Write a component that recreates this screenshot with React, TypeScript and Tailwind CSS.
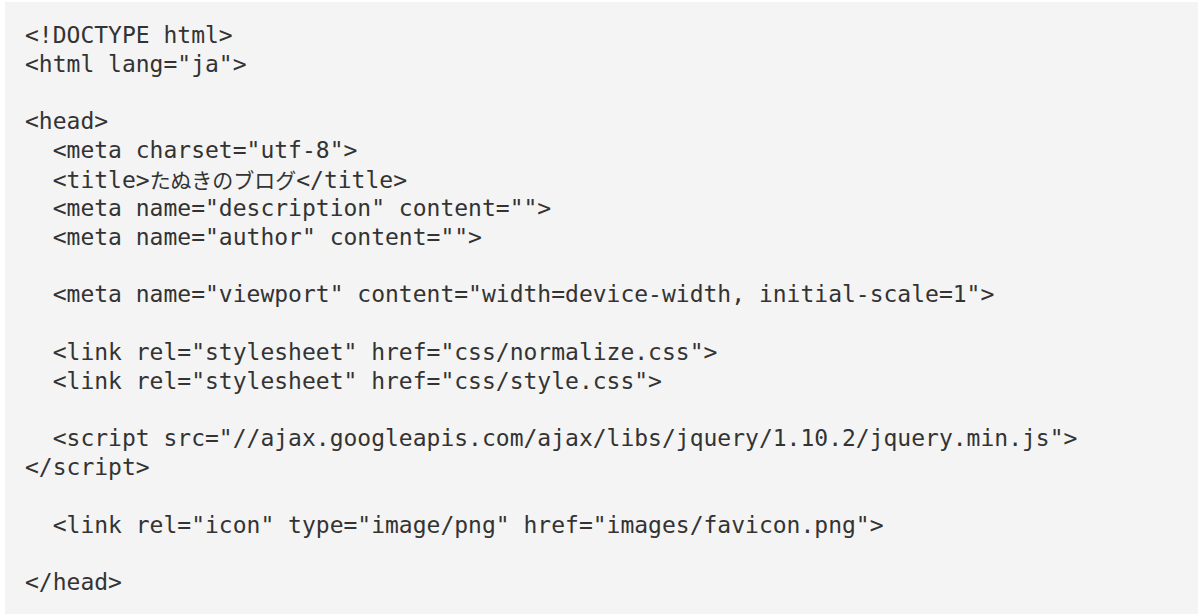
import React from "react";

const lines: React.ReactNode[] = [
  '<!DOCTYPE html>',
  '<html lang="ja">',
  '',
  '<head>',
  '  <meta charset="utf-8">',
  <>
    {'  <title>'}
    <span className="text-[21px] [font-family:'Noto_Sans_CJK_JP',sans-serif]">たぬきのブログ</span>
    {'</title>'}
  </>,
  '  <meta name="description" content="">',
  '  <meta name="author" content="">',
  '',
  '  <meta name="viewport" content="width=device-width, initial-scale=1">',
  '',
  '  <link rel="stylesheet" href="css/normalize.css">',
  '  <link rel="stylesheet" href="css/style.css">',
  '',
  '  <script src="//ajax.googleapis.com/ajax/libs/jquery/1.10.2/jquery.min.js">',
  '</script>',
  '',
  '  <link rel="icon" type="image/png" href="images/favicon.png">',
  '',
  '</head>',
];

export default function App() {
  return (
    <div className="w-[1200px] h-[614px] bg-white pl-[5px] pt-[2px] overflow-hidden">
      <div className="h-[612px] w-[1193px] bg-[#f4f4f4] pl-[20px] pt-[19px]">
        <pre className="text-[23px] leading-[28.8px] text-[#333333] [font-family:'DejaVu_Sans_Mono','Noto_Sans_CJK_JP',monospace]">
          {lines.map((l, i) => (
            <div key={i} className="h-[28.8px] whitespace-pre">
              {l}
            </div>
          ))}
        </pre>
      </div>
    </div>
  );
}
